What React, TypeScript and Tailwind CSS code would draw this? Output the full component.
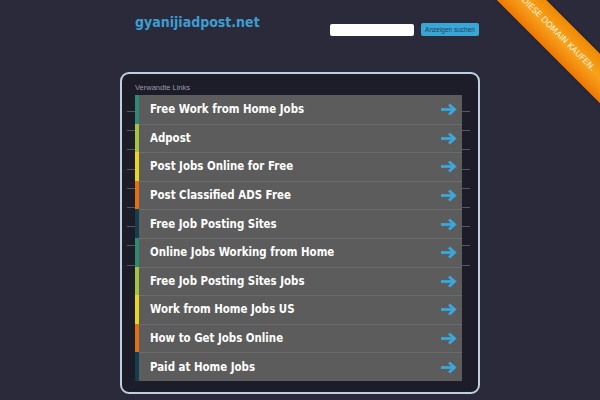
import React from 'react';

const links = [
  { label: 'Free Work from Home Jobs', accent: 'bg-[#2b8a70]' },
  { label: 'Adpost', accent: 'bg-[#a3c43c]' },
  { label: 'Post Jobs Online for Free', accent: 'bg-[#e9d41e]' },
  { label: 'Post Classified ADS Free', accent: 'bg-[#e2700e]' },
  { label: 'Free Job Posting Sites', accent: 'bg-[#113f4f]' },
  { label: 'Online Jobs Working from Home', accent: 'bg-[#2b8a70]' },
  { label: 'Free Job Posting Sites Jobs', accent: 'bg-[#a3c43c]' },
  { label: 'Work from Home Jobs US', accent: 'bg-[#e9d41e]' },
  { label: 'How to Get Jobs Online', accent: 'bg-[#e2700e]' },
  { label: 'Paid at Home Jobs', accent: 'bg-[#113f4f]' },
];

const Arrow: React.FC = () => (
  <svg width="17" height="13" viewBox="0 0 17 13" fill="none">
    <path d="M1 6.5h13" stroke="#3aa8dc" strokeWidth="2.8" />
    <path d="M9 1.5L14.5 6.5 9 11.5" stroke="#3aa8dc" strokeWidth="2.8" strokeLinejoin="miter" />
  </svg>
);

const App: React.FC = () => {
  return (
    <div className="relative w-[600px] h-[400px] overflow-hidden bg-[#2b2a3b] font-['DejaVu_Sans',sans-serif]">
      {/* header */}
      <div className="flex items-start h-[72px] pl-[135px] pt-[11px]">
        <div className="w-[195px] text-[14px] leading-[22px] font-bold text-[#3d9dd0] font-['DejaVu_Sans_Condensed','DejaVu_Sans',sans-serif]">
          gyanijiadpost.net
        </div>
        <div className="mt-[13px] w-[84px] h-[12px] bg-white rounded-[2px]" />
        <button className="ml-[7px] mt-[12px] w-[58px] h-[13px] bg-[#3aa6d6] rounded-[2px] text-[6.5px] leading-[13px] text-[#1c3e5a] font-['Liberation_Sans',sans-serif] text-center">
          Anzeigen suchen
        </button>
      </div>

      {/* main panel */}
      <div className="ml-[120px] w-[360px] h-[322px] border-2 border-[#bcd0e0] rounded-[9px] bg-[#1d1d2a] pl-[13px] pr-[16px]">
        <div className="pt-[9px] mb-[2px] text-[7.5px] leading-[10px] text-[#9a9aa6] font-['Liberation_Sans',sans-serif]">
          Verwandte Links
        </div>
        <div className="relative">
          <div className="absolute left-[-8px] right-[-8px] top-[16px] h-[155px] bg-[repeating-linear-gradient(to_bottom,#555563_0px,#555563_1px,transparent_1px,transparent_19.2px)]" />
          <div className="relative">
            {links.map((l, i) => (
              <div key={i} className="flex h-[28.6px]">
                <div className={`w-[4px] ${l.accent}`} />
                <div
                  className={`flex-1 flex items-center justify-between bg-[#5c5c5c] pl-[11px] pr-[5px] ${
                    i > 0 ? 'border-t border-[#6c6c6c]' : ''
                  }`}
                >
                  <span className="text-[11.4px] font-bold text-white font-['DejaVu_Sans_Condensed','DejaVu_Sans',sans-serif]">
                    {l.label}
                  </span>
                  <Arrow />
                </div>
              </div>
            ))}
          </div>
        </div>
      </div>

      {/* corner ribbon */}
      <div className="absolute left-[457px] top-[17.5px] w-[200px] h-[35px] rotate-45 bg-gradient-to-b from-[#f08800] via-[#f7a31c] to-[#ee7800] flex items-center justify-center pb-[5px] shadow-[0_0_3px_rgba(0,0,0,0.4)]">
        <span className="text-[8.3px] leading-[11px] text-[#fff2de] whitespace-nowrap">DIESE DOMAIN KAUFEN.</span>
      </div>
    </div>
  );
};

export default App;
